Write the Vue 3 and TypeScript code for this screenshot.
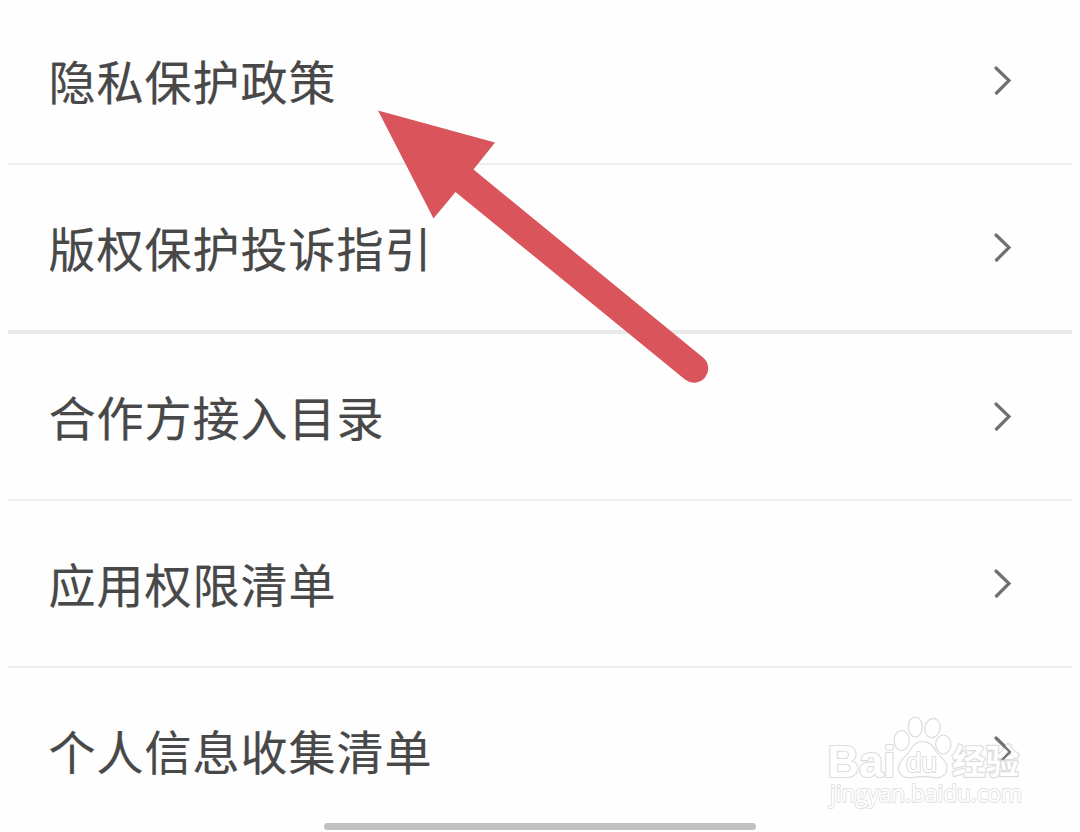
<script setup lang="ts">
interface Entry {
  label: string
  strong?: boolean
}

const entries: Entry[] = [
  { label: '隐私保护政策' },
  { label: '版权保护投诉指引', strong: true },
  { label: '合作方接入目录' },
  { label: '应用权限清单' },
  { label: '个人信息收集清单' },
]
</script>

<template>
  <main class="screen">
    <ul class="list">
      <li v-for="entry in entries" :key="entry.label" class="row" :class="{ strong: entry.strong }">
        <span class="label">{{ entry.label }}</span>
        <svg class="chevron" width="20" height="30" viewBox="0 0 20 30">
          <path d="M3 2 L16 14.5 L3.5 27" />
        </svg>
      </li>
    </ul>

    <svg class="arrow" width="340" height="280" viewBox="0 0 340 280">
      <path d="M8 10.5 L125 42.5 L103.5 69.5 L333 257.5 A14 14 0 0 1 315 279.5 L85.5 92 L63.5 118.5 Z" />
    </svg>

    <svg class="watermark" width="210" height="104" viewBox="0 0 210 104">
      <text x="4.5" y="68.5" class="latin" textLength="68" lengthAdjust="spacingAndGlyphs">Bai</text>
      <g class="paw">
        <ellipse cx="78.7" cy="32.5" rx="7.6" ry="10" />
        <ellipse cx="92.3" cy="19" rx="7" ry="10" />
        <ellipse cx="109.5" cy="20" rx="7.6" ry="9.6" transform="rotate(12 109.5 20)" />
        <ellipse cx="120.3" cy="36.5" rx="7.6" ry="9.5" />
        <path d="M99.500 33.500 C92 33.500 89 39 86 44 C82 50 75.500 53 75.500 60 C75.500 67 81 70.500 88 69.800 C95 68.500 105 68.500 112 69.800 C119 70.500 124 66 124 59.500 C124 53 117 49 113.500 44 C110 38 107 33.500 99.500 33.500 Z" />
      </g>
      <text x="83" y="64" class="du" textLength="31" lengthAdjust="spacingAndGlyphs">du</text>
      <text x="129" y="66" class="han" textLength="67" lengthAdjust="spacingAndGlyphs">经验</text>
      <path class="tip" d="M180.500 37.500 L187 44 L179.500 51.500" />
      <text x="7" y="94" class="site" textLength="192" lengthAdjust="spacingAndGlyphs">jingyan.baidu.com</text>
    </svg>

    <div class="home-bar"></div>
  </main>
</template>

<style>
body {
  margin: 0;
  background: #fefefe;
}
</style>

<style scoped>
.screen {
  position: relative;
  box-sizing: border-box;
  width: 1080px;
  height: 832px;
  overflow: hidden;
  background: #fefefe;
  font-family: "Noto Sans CJK SC", sans-serif;
}

.list {
  list-style: none;
  margin: -2px 8px 0;
  padding: 0;
}

.row {
  display: flex;
  align-items: center;
  justify-content: space-between;
  height: 165px;
  padding: 0 59px 0 40.5px;
  border-bottom: 2px solid #ededed;
}

.row.strong {
  border-bottom: 4px solid #eaeaea;
}

.row:last-child {
  border-bottom: 0;
}

.label {
  padding-bottom: 2px;
  font-size: 47px;
  line-height: 68px;
  letter-spacing: 1px;
  color: #484848;
  -webkit-text-stroke: 0.2px #484848;
  white-space: nowrap;
}

.chevron {
  fill: none;
  stroke: #707070;
  stroke-width: 3.2;
  stroke-linejoin: miter;
  stroke-linecap: round;
}

.arrow {
  position: absolute;
  left: 370px;
  top: 100px;
  overflow: visible;
  fill: #da555b;
}

.watermark {
  position: absolute;
  left: 823px;
  top: 708px;
  overflow: visible;
  fill: #fff;
  stroke: #dcdcdc;
  stroke-linejoin: round;
}

.paw {
  stroke-width: 1.2;
}

.latin {
  font: bold 44px "Liberation Sans", Arial, sans-serif;
  stroke-width: 2.2px;
  paint-order: stroke;
}

.du {
  font: 28px "Liberation Sans", Arial, sans-serif;
  stroke-width: 2px;
  paint-order: stroke;
}

.han {
  font: 700 34px "Noto Sans CJK SC", sans-serif;
  stroke-width: 2.4px;
  paint-order: stroke;
}

.tip {
  fill: none;
  stroke: #707070;
  stroke-width: 2.4px;
}

.site {
  font: 24px "Open Sans", "Noto Sans", sans-serif;
  stroke: #e2e2e2;
  stroke-width: 2px;
  paint-order: stroke;
}

.home-bar {
  position: absolute;
  left: 324px;
  bottom: 2px;
  width: 432px;
  height: 7px;
  border-radius: 4px;
  background: #c1c1c1;
}
</style>
